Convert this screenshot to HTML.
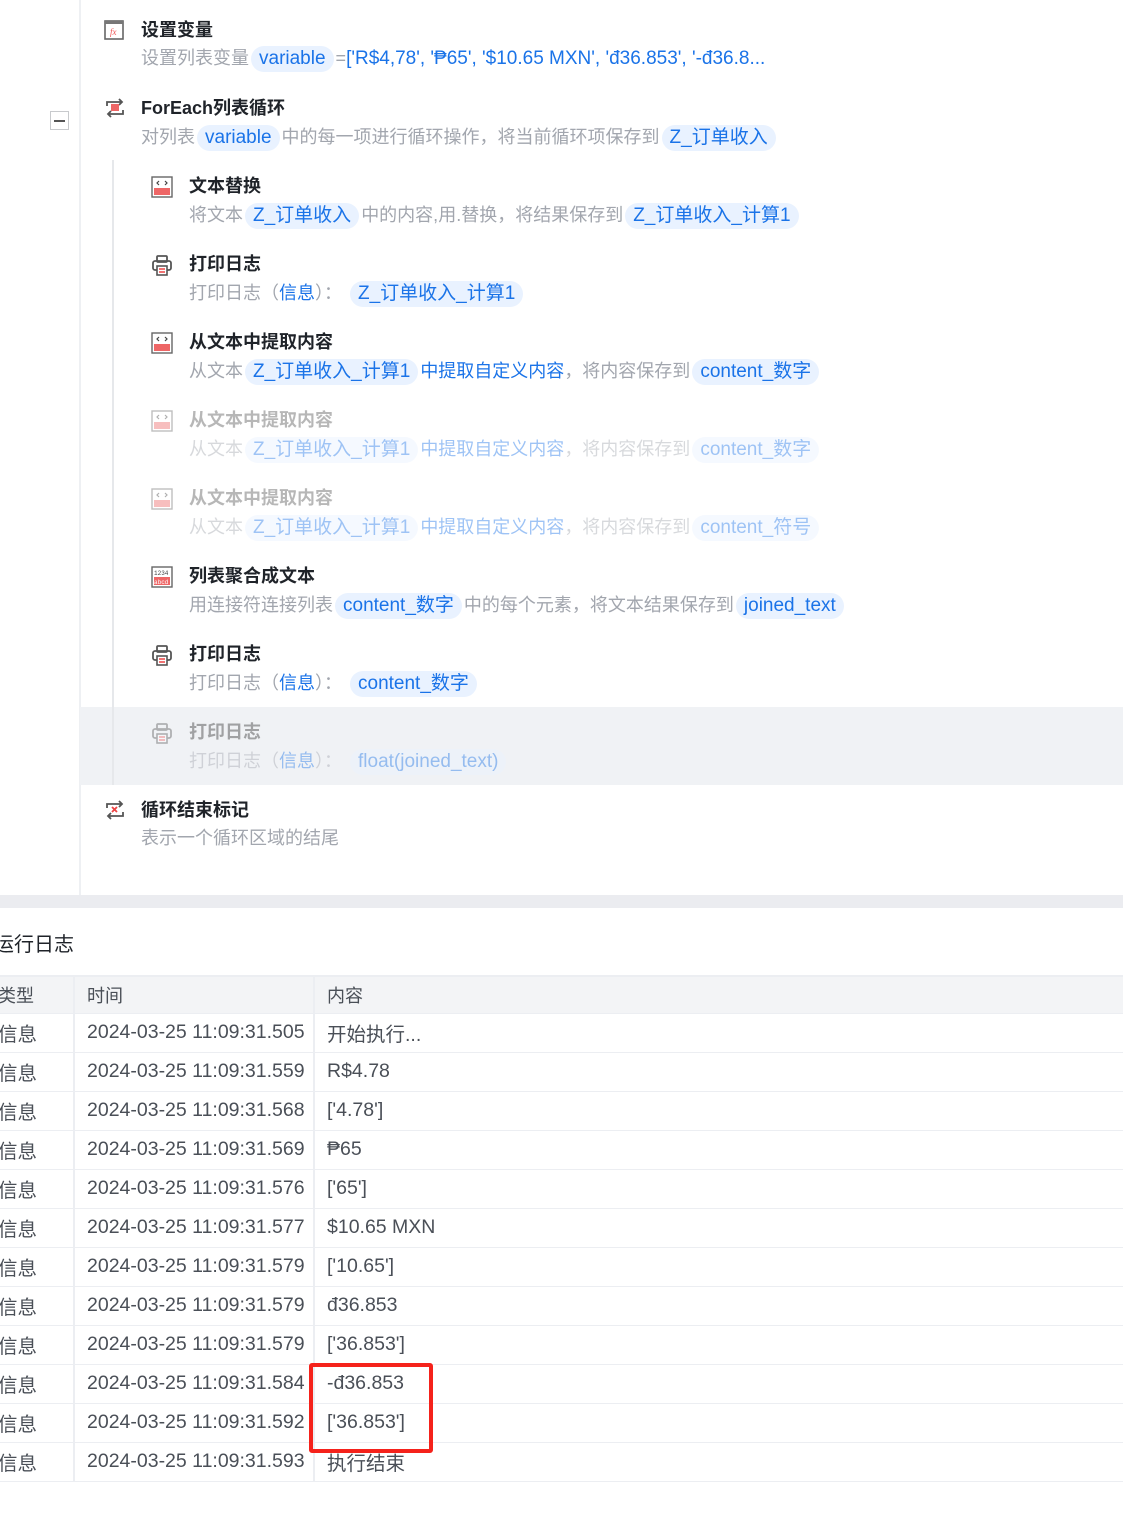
<!DOCTYPE html>
<html style="overflow:hidden"><head><meta charset="utf-8"><style>
*{margin:0;padding:0;box-sizing:border-box}
html,body{width:1123px;height:1522px;overflow:hidden}
body{background:#fff;position:relative;font-family:"Liberation Sans","Noto Sans CJK SC",sans-serif}
.a{position:absolute;white-space:nowrap}
.t{font-size:18px;font-weight:bold;color:#1f2329;line-height:24px}
.d{font-size:18px;color:#a2a6ae;line-height:26px}
.p{display:inline-block;background:#e9f2ff;color:#1a73e8;border-radius:13px;padding:0 8px;font-size:19px;line-height:26px;height:26px;margin:0 2px}
.b{color:#1a73e8}
.dis{opacity:.42}
.ic{position:absolute}
table{position:absolute;left:-6px;top:975px;border-collapse:collapse;font-size:19.5px;color:#4a4f57;width:1129px;table-layout:fixed}
td{height:39px;border-bottom:1.5px solid #eceef2;border-right:2px solid #eceef2;padding:0 0 0 12px;vertical-align:middle;white-space:nowrap;overflow:hidden}
td:first-child{padding-left:4px}
tr.h td{background:#f3f4f6;color:#4a4f57;font-size:18px;border-top:2px solid #eceef2;height:37px}
</style></head><body>
<div class="a" style="left:79px;top:0;width:2px;height:895px;background:#eef0f3"></div>
<div class="a" style="left:80px;top:707px;width:1043px;height:78px;background:#f0f2f5"></div>
<div class="a" style="left:112px;top:160px;width:2px;height:625px;background:#e6e8eb"></div>
<div class="a" style="left:50px;top:111px;width:19px;height:19px;border:1px solid #c8cacd;background:#fff"></div>
<div class="a" style="left:54px;top:120px;width:11px;height:1.5px;background:#555"></div>

<svg class="ic" style="left:104px;top:20px" width="20" height="20"><rect x="1" y="1" width="18" height="18" fill="#fff" stroke="#666" stroke-width="1.6"/><rect x="1" y="1" width="18" height="3" fill="#777"/><text x="6" y="15" font-size="9" font-style="italic" fill="#e55" font-family="Liberation Serif">fx</text></svg>
<svg class="ic" style="left:104px;top:98px" width="22" height="20"><path d="M3 8V4h14M15 1l3 3-3 3M19 12v4H5M7 13l-3 3 3 3" fill="none" stroke="#555" stroke-width="1.8"/><rect x="7" y="6" width="8" height="7" fill="#e66"/></svg>
<svg class="ic" style="left:104px;top:800px" width="22" height="20"><path d="M3 8V4h14M15 1l3 3-3 3M19 12v4H5M7 13l-3 3 3 3" fill="none" stroke="#555" stroke-width="1.8"/><path d="M8 7l5 5M13 7l-5 5" stroke="#e44" stroke-width="1.8"/></svg>

<div class="a t" style="left:141px;top:18px">设置变量</div>
<div class="a d" style="left:141px;top:45px">设置列表变量<span class="p">variable</span>=<span class="b" style="font-size:19px">['R$4,78', '₱65', '$10.65 MXN', 'đ36.853', '-đ36.8...</span></div>
<div class="a t" style="left:141px;top:96px">ForEach列表循环</div>
<div class="a d" style="left:141px;top:124px">对列表<span class="p">variable</span>中的每一项进行循环操作，将当前循环项保存到<span class="p">Z_订单收入</span></div>

<svg class="ic" style="left:151px;top:176px" width="22" height="22"><rect x="1" y="1" width="20" height="20" fill="#fff" stroke="#666" stroke-width="1.4"/><path d="M8 5l-2 2 2 2M14 5l2 2-2 2" fill="none" stroke="#444" stroke-width="1.2"/><rect x="3" y="12" width="16" height="7" fill="#e66"/></svg>
<div class="a t" style="left:189px;top:174px">文本替换</div>
<div class="a d" style="left:189px;top:202px">将文本<span class="p">Z_订单收入</span>中的内容,用.替换，将结果保存到<span class="p">Z_订单收入_计算1</span></div>

<svg class="ic" style="left:151px;top:254px" width="22" height="22"><rect x="6" y="2" width="10" height="6" rx="1" fill="none" stroke="#555" stroke-width="1.8"/><rect x="2" y="7" width="18" height="9" rx="2" fill="none" stroke="#555" stroke-width="1.8"/><rect x="6" y="12" width="10" height="9" fill="#fff" stroke="#555" stroke-width="1.6"/><path d="M8 15h6M8 18h6" stroke="#e44" stroke-width="1.4"/></svg>
<div class="a t" style="left:189px;top:252px">打印日志</div>
<div class="a d" style="left:189px;top:280px">打印日志（<span class="b">信息</span>）：<span class="p" style="margin-left:8px">Z_订单收入_计算1</span></div>

<svg class="ic" style="left:151px;top:332px" width="22" height="22"><rect x="1" y="1" width="20" height="20" fill="#fff" stroke="#666" stroke-width="1.4"/><path d="M8 5l-2 2 2 2M14 5l2 2-2 2" fill="none" stroke="#444" stroke-width="1.2"/><rect x="3" y="12" width="16" height="7" fill="#e66"/></svg>
<div class="a t" style="left:189px;top:330px">从文本中提取内容</div>
<div class="a d" style="left:189px;top:358px">从文本<span class="p">Z_订单收入_计算1</span><span class="b">中提取自定义内容</span>，将内容保存到<span class="p">content_数字</span></div>

<div class="dis">
<svg class="ic" style="left:151px;top:410px" width="22" height="22"><rect x="1" y="1" width="20" height="20" fill="#fff" stroke="#666" stroke-width="1.4"/><path d="M8 5l-2 2 2 2M14 5l2 2-2 2" fill="none" stroke="#444" stroke-width="1.2"/><rect x="3" y="12" width="16" height="7" fill="#e66"/></svg>
<div class="a t" style="left:189px;top:408px;color:#555">从文本中提取内容</div>
<div class="a d" style="left:189px;top:436px">从文本<span class="p">Z_订单收入_计算1</span><span class="b">中提取自定义内容</span>，将内容保存到<span class="p">content_数字</span></div>
<svg class="ic" style="left:151px;top:488px" width="22" height="22"><rect x="1" y="1" width="20" height="20" fill="#fff" stroke="#666" stroke-width="1.4"/><path d="M8 5l-2 2 2 2M14 5l2 2-2 2" fill="none" stroke="#444" stroke-width="1.2"/><rect x="3" y="12" width="16" height="7" fill="#e66"/></svg>
<div class="a t" style="left:189px;top:486px;color:#555">从文本中提取内容</div>
<div class="a d" style="left:189px;top:514px">从文本<span class="p">Z_订单收入_计算1</span><span class="b">中提取自定义内容</span>，将内容保存到<span class="p">content_符号</span></div>
</div>

<svg class="ic" style="left:151px;top:566px" width="22" height="22"><rect x="1" y="1" width="20" height="20" fill="#fff" stroke="#666" stroke-width="1.4"/><text x="3" y="9" font-size="6" fill="#444" font-family="Liberation Mono">1234</text><rect x="3" y="11" width="16" height="8" fill="#e66"/><text x="3" y="18" font-size="6" fill="#fff" font-family="Liberation Mono">abcd</text></svg>
<div class="a t" style="left:189px;top:564px">列表聚合成文本</div>
<div class="a d" style="left:189px;top:592px">用连接符连接列表<span class="p">content_数字</span>中的每个元素，将文本结果保存到<span class="p">joined_text</span></div>

<svg class="ic" style="left:151px;top:644px" width="22" height="22"><rect x="6" y="2" width="10" height="6" rx="1" fill="none" stroke="#555" stroke-width="1.8"/><rect x="2" y="7" width="18" height="9" rx="2" fill="none" stroke="#555" stroke-width="1.8"/><rect x="6" y="12" width="10" height="9" fill="#fff" stroke="#555" stroke-width="1.6"/><path d="M8 15h6M8 18h6" stroke="#e44" stroke-width="1.4"/></svg>
<div class="a t" style="left:189px;top:642px">打印日志</div>
<div class="a d" style="left:189px;top:670px">打印日志（<span class="b">信息</span>）：<span class="p" style="margin-left:8px">content_数字</span></div>

<div class="dis">
<svg class="ic" style="left:151px;top:722px" width="22" height="22"><rect x="6" y="2" width="10" height="6" rx="1" fill="none" stroke="#555" stroke-width="1.8"/><rect x="2" y="7" width="18" height="9" rx="2" fill="none" stroke="#555" stroke-width="1.8"/><rect x="6" y="12" width="10" height="9" fill="#fff" stroke="#555" stroke-width="1.6"/><path d="M8 15h6M8 18h6" stroke="#e44" stroke-width="1.4"/></svg>
<div class="a t" style="left:189px;top:720px;color:#333">打印日志</div>
<div class="a d" style="left:189px;top:748px">打印日志（<span class="b">信息</span>）：<span class="p" style="margin-left:8px">float(joined_text)</span></div>
</div>

<div class="a t" style="left:141px;top:798px">循环结束标记</div>
<div class="a d" style="left:141px;top:825px">表示一个循环区域的结尾</div>

<div class="a" style="left:0;top:895px;width:1123px;height:13px;background:#ebecf0"></div>
<div class="a" style="left:-6px;top:928px;font-size:20px;color:#1f2329">运行日志</div>

<table>
<colgroup><col style="width:80px"><col style="width:240px"><col></colgroup>
<tr class="h"><td>类型</td><td>时间</td><td style="border-right:none">内容</td></tr>
<tr><td>信息</td><td>2024-03-25 11:09:31.505</td><td style="border-right:none">开始执行...</td></tr>
<tr><td>信息</td><td>2024-03-25 11:09:31.559</td><td style="border-right:none">R$4.78</td></tr>
<tr><td>信息</td><td>2024-03-25 11:09:31.568</td><td style="border-right:none">['4.78']</td></tr>
<tr><td>信息</td><td>2024-03-25 11:09:31.569</td><td style="border-right:none">₱65</td></tr>
<tr><td>信息</td><td>2024-03-25 11:09:31.576</td><td style="border-right:none">['65']</td></tr>
<tr><td>信息</td><td>2024-03-25 11:09:31.577</td><td style="border-right:none">$10.65 MXN</td></tr>
<tr><td>信息</td><td>2024-03-25 11:09:31.579</td><td style="border-right:none">['10.65']</td></tr>
<tr><td>信息</td><td>2024-03-25 11:09:31.579</td><td style="border-right:none">đ36.853</td></tr>
<tr><td>信息</td><td>2024-03-25 11:09:31.579</td><td style="border-right:none">['36.853']</td></tr>
<tr><td>信息</td><td>2024-03-25 11:09:31.584</td><td style="border-right:none">-đ36.853</td></tr>
<tr><td>信息</td><td>2024-03-25 11:09:31.592</td><td style="border-right:none">['36.853']</td></tr>
<tr><td>信息</td><td>2024-03-25 11:09:31.593</td><td style="border-right:none">执行结束</td></tr>
</table>
<div class="a" style="left:309px;top:1363px;width:124px;height:90px;border:4px solid #f5221b;border-radius:3px"></div>
</body></html>
